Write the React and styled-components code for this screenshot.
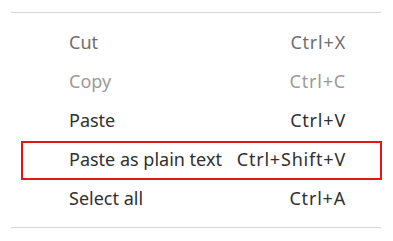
import React from "react";
import styled, { createGlobalStyle } from "styled-components";

const GlobalStyle = createGlobalStyle`
  html, body {
    margin: 0;
    padding: 0;
    background: #ffffff;
  }
`;

const Menu = styled.div`
  width: 371px;
  margin-left: 11px;
  padding-top: 12px;
  font-family: 'Noto Sans', 'Open Sans', sans-serif;
  font-size: 18px;
`;

const Separator = styled.div`
  width: 370px;
  height: 1px;
  background: #d6d6d6;
`;

const List = styled.div`
  display: flex;
  flex-direction: column;
  padding: 11px 0 8px 10px;
`;

const Item = styled.div`
  box-sizing: border-box;
  height: 39px;
  display: flex;
  align-items: center;
  justify-content: space-between;
  padding: 0 34px 3px 46px;
  border: 2px solid ${props => (props.$highlight ? "#e8141c" : "transparent")};
  color: ${props => props.$color || "#303030"};
`;

const Label = styled.span`
  white-space: nowrap;
  line-height: 1;
`;

const Shortcut = styled.span`
  white-space: nowrap;
  line-height: 1;
  letter-spacing: 0.8px;
`;

const items = [
  { label: "Cut", shortcut: "Ctrl+X", color: "#6f6f6f" },
  { label: "Copy", shortcut: "Ctrl+C", color: "#9a9a9a" },
  { label: "Paste", shortcut: "Ctrl+V" },
  { label: "Paste as plain text", shortcut: "Ctrl+Shift+V", highlight: true },
  { label: "Select all", shortcut: "Ctrl+A" },
];

const App = () => {
  return (
    <>
      <GlobalStyle />
      <Menu>
        <Separator />
        <List>
          {items.map(item => (
            <Item key={item.label} $color={item.color} $highlight={item.highlight}>
              <Label>{item.label}</Label>
              <Shortcut>{item.shortcut}</Shortcut>
            </Item>
          ))}
        </List>
        <Separator />
      </Menu>
    </>
  );
};

export default App;
